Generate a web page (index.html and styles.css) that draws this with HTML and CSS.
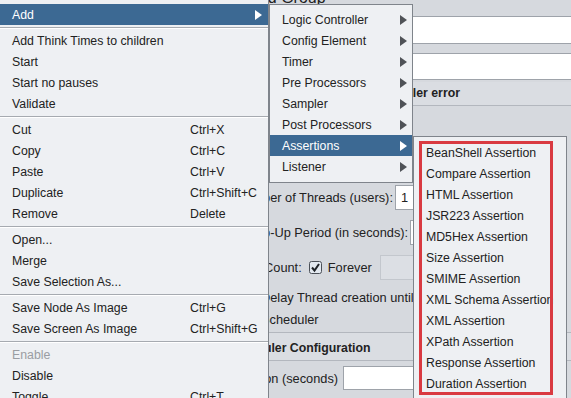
FILE: index.html
```html
<!DOCTYPE html>
<html>
<head>
    <title>Thread Group</title>
    <link rel="stylesheet" href="styles.css">
</head>
<body>
    <div class="panel">
        <h2 class="panel-title">Thread Group</h2>

        <div class="field-row name-row">
            <span class="field-label">Name:</span>
            <div class="field"></div>
        </div>
        <div class="field-row comment-row">
            <span class="field-label">Comments:</span>
            <div class="field"></div>
        </div>

        <div class="section-head">Action to be taken after a Sampler error</div>

        <div class="section-head props-head">Thread Properties</div>

        <div class="prop-row">
            <span>Number of Threads (users):</span>
            <div class="field small">1</div>
        </div>
        <div class="prop-row">
            <span>Ramp-Up Period (in seconds):</span>
            <div class="field small"></div>
        </div>
        <div class="prop-row loop-row">
            <span>Loop Count:</span>
            <svg class="checkbox" width="13" height="13" viewBox="0 0 13 13">
                <rect x="0.5" y="0.5" width="12" height="12" rx="2" fill="#e3e9f0" stroke="#4b5058"/>
                <path d="M3 6.5 L5.5 9.5 L10 3" fill="none" stroke="#1f2328" stroke-width="2"/>
            </svg>
            <span class="check-text">Forever</span>
            <div class="field small disabled"></div>
        </div>
        <div class="check-row">
            <svg class="checkbox" width="13" height="13" viewBox="0 0 13 13">
                <rect x="0.5" y="0.5" width="12" height="12" rx="2" fill="#e3e9f0" stroke="#4b5058"/>
            </svg>
            <span>Delay Thread creation until needed</span>
        </div>
        <div class="check-row">
            <svg class="checkbox" width="13" height="13" viewBox="0 0 13 13">
                <rect x="0.5" y="0.5" width="12" height="12" rx="2" fill="#e3e9f0" stroke="#4b5058"/>
            </svg>
            <span>Scheduler</span>
        </div>

        <div class="section-head sched-head">Scheduler Configuration</div>

        <div class="prop-row duration-row">
            <span>Duration (seconds)</span>
            <div class="field small"></div>
        </div>
    </div>

    <!-- context menu -->
    <div class="menu main-menu">
        <div class="item active"><span>Add</span><span></span>
            <svg class="arrow" width="7" height="10" viewBox="0 0 7 10"><polygon points="0,0 7,5 0,10"/></svg>
        </div>
        <div class="sep"></div>
        <div class="item"><span>Add Think Times to children</span></div>
        <div class="item"><span>Start</span></div>
        <div class="item"><span>Start no pauses</span></div>
        <div class="item"><span>Validate</span></div>
        <div class="sep"></div>
        <div class="item"><span>Cut</span><span>Ctrl+X</span></div>
        <div class="item"><span>Copy</span><span>Ctrl+C</span></div>
        <div class="item"><span>Paste</span><span>Ctrl+V</span></div>
        <div class="item"><span>Duplicate</span><span>Ctrl+Shift+C</span></div>
        <div class="item"><span>Remove</span><span>Delete</span></div>
        <div class="sep"></div>
        <div class="item"><span>Open...</span></div>
        <div class="item"><span>Merge</span></div>
        <div class="item"><span>Save Selection As...</span></div>
        <div class="sep"></div>
        <div class="item"><span>Save Node As Image</span><span>Ctrl+G</span></div>
        <div class="item"><span>Save Screen As Image</span><span>Ctrl+Shift+G</span></div>
        <div class="sep"></div>
        <div class="item disabled"><span>Enable</span></div>
        <div class="item"><span>Disable</span></div>
        <div class="item"><span>Toggle</span><span>Ctrl+T</span></div>
    </div>

    <div class="menu sub-menu">
        <div class="item"><span>Logic Controller</span><svg class="arrow" width="7" height="10" viewBox="0 0 7 10"><polygon points="0,0 7,5 0,10"/></svg></div>
        <div class="item"><span>Config Element</span><svg class="arrow" width="7" height="10" viewBox="0 0 7 10"><polygon points="0,0 7,5 0,10"/></svg></div>
        <div class="item"><span>Timer</span><svg class="arrow" width="7" height="10" viewBox="0 0 7 10"><polygon points="0,0 7,5 0,10"/></svg></div>
        <div class="item"><span>Pre Processors</span><svg class="arrow" width="7" height="10" viewBox="0 0 7 10"><polygon points="0,0 7,5 0,10"/></svg></div>
        <div class="item"><span>Sampler</span><svg class="arrow" width="7" height="10" viewBox="0 0 7 10"><polygon points="0,0 7,5 0,10"/></svg></div>
        <div class="item"><span>Post Processors</span><svg class="arrow" width="7" height="10" viewBox="0 0 7 10"><polygon points="0,0 7,5 0,10"/></svg></div>
        <div class="item active"><span>Assertions</span><svg class="arrow" width="7" height="10" viewBox="0 0 7 10"><polygon points="0,0 7,5 0,10"/></svg></div>
        <div class="item"><span>Listener</span><svg class="arrow" width="7" height="10" viewBox="0 0 7 10"><polygon points="0,0 7,5 0,10"/></svg></div>
    </div>

    <div class="menu assert-menu">
        <div class="item">BeanShell Assertion</div>
        <div class="item">Compare Assertion</div>
        <div class="item">HTML Assertion</div>
        <div class="item">JSR223 Assertion</div>
        <div class="item">MD5Hex Assertion</div>
        <div class="item">Size Assertion</div>
        <div class="item">SMIME Assertion</div>
        <div class="item">XML Schema Assertion</div>
        <div class="item">XML Assertion</div>
        <div class="item">XPath Assertion</div>
        <div class="item">Response Assertion</div>
        <div class="item">Duration Assertion</div>
    </div>

    <!-- red annotation box drawn over the assertions list -->
    <div class="callout"></div>
</body>
</html>
```

FILE: styles.css
```css
* {
    margin: 0;
    padding: 0;
    box-sizing: border-box;
}

body {
    width: 571px;
    height: 398px;
    overflow: hidden;
    position: relative;
    background-color: #d6d9de;
    font-family: "Liberation Sans", Arial, sans-serif;
    font-size: 12.3px;
    color: #222;
}

/* background: thread group editor */
.panel {
    display: flex;
    flex-direction: column;
    padding-left: 226px;
    white-space: nowrap;
    font-size: 12.8px;
}

.panel-title {
    font-size: 16px;
    font-weight: normal;
    line-height: 16px;
    margin-top: -10px;
    margin-bottom: 10px;
}

.field {
    background-color: #ffffff;
    border: 1px solid #9ea3aa;
}

.field-row {
    display: flex;
    align-items: center;
}

.field-label {
    width: 60px;
}

.field-row .field {
    flex: 1;
    height: 100%;
    margin-right: -4px;
}

.name-row {
    height: 28px;
    margin-bottom: 9px;
}

.comment-row {
    height: 27px;
    margin-bottom: 2px;
}

.section-head {
    height: 24px;
    line-height: 23px;
    padding-left: 3px;
    font-size: 12.3px;
    font-weight: bold;
    background-color: #dadde2;
    border-bottom: 1px solid #b3b7be;
}

.props-head {
    margin-top: 55px;
    background: none;
    border: none;
}

.prop-row {
    display: flex;
    align-items: center;
    height: 25px;
    margin-bottom: 10px;
    padding-left: 10px;
}

.prop-row .field.small {
    width: 60px;
    height: 100%;
    margin-left: 2px;
    padding-left: 5px;
    line-height: 23px;
}

.loop-row {
    padding-left: 6px;
    margin-bottom: 6px;
}

.loop-row .checkbox {
    margin-left: 7px;
}

.check-text {
    margin-left: 6px;
}

.loop-row .field.small {
    margin-left: 8px;
}

.field.disabled {
    background-color: #dcdfe4;
    border-color: #c3c7cd;
}

.check-row {
    display: flex;
    align-items: center;
    gap: 4px;
    height: 22px;
    padding-left: 18px;
}

.sched-head {
    margin-top: 2px;
    height: 29px;
    line-height: 28px;
    padding-top: 1px;
    padding-left: 1px;
    border-top: 1px solid #b3b7be;
}

.duration-row {
    margin-top: 5px;
    height: 24px;
    padding-left: 4px;
}

.duration-row .field.small {
    width: 80px;
    margin-left: 5px;
}

/* popup menus */
.menu {
    position: absolute;
    background-color: #eef0f3;
    border: 1px solid #7f848b;
    white-space: nowrap;
}

.item {
    height: 21px;
    display: flex;
    align-items: center;
    padding-left: 12px;
}

.item.active {
    background-color: #3c6993;
    color: #ffffff;
}

.item.disabled {
    color: #9a9da2;
}

.arrow {
    fill: #4f5257;
}

.item.active .arrow {
    fill: #ffffff;
}

.sep {
    height: 1px;
    margin: 2px 0;
    background-color: #a6aab0;
    box-shadow: 0 1px 0 #ffffff;
}

.main-menu {
    left: 0;
    top: 0;
    width: 269px;
    height: 420px;
    padding-top: 4px;
    border-top: none;
    border-left: none;
}

.main-menu .item {
    display: grid;
    grid-template-columns: 178px 1fr auto;
    padding-right: 6px;
}

.sub-menu {
    left: 269px;
    top: 4px;
    width: 144px;
    padding: 4px 0 5px;
}

.sub-menu .item {
    justify-content: space-between;
    padding-right: 5px;
}

.assert-menu {
    left: 413px;
    top: 136px;
    width: 154px;
    padding-top: 5px;
    height: 280px;
}

.callout {
    position: absolute;
    left: 419px;
    top: 141px;
    width: 134px;
    height: 254px;
    border: 3px solid #d93a41;
}
```
